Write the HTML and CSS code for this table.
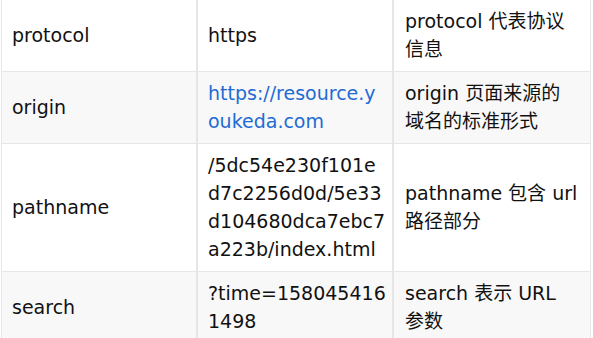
FILE: index.html
```html
<!DOCTYPE html>
<html lang="zh-CN">
<head>
<meta charset="utf-8">
<link rel="stylesheet" href="styles.css">
</head>
<body>
<table class="props">
  <tbody>
    <tr>
      <td class="k">protocol</td>
      <td class="v">https</td>
      <td class="d">protocol 代表协议信息</td>
    </tr>
    <tr class="alt">
      <td class="k">origin</td>
      <td class="v"><a class="link" href="#">https://resource.youkeda.com</a></td>
      <td class="d">origin 页面来源的域名的标准形式</td>
    </tr>
    <tr>
      <td class="k">pathname</td>
      <td class="v">/5dc54e230f101ed7c2256d0d/5e33d104680dca7ebc7a223b/index.html</td>
      <td class="d">pathname 包含 url 路径部分</td>
    </tr>
    <tr class="alt">
      <td class="k">search</td>
      <td class="v">?time=1580454161498</td>
      <td class="d">search 表示 URL 参数</td>
    </tr>
  </tbody>
</table>
</body>
</html>
```
FILE: styles.css
```css
html, body {
  margin: 0;
  padding: 0;
  background: #fff;
}
body {
  padding-left: 1px;
  font-family: "DejaVu Sans", "Noto Sans CJK SC", sans-serif;
  font-size: 19px;
  line-height: 28px;
  color: #111;
}
.props {
  border-collapse: separate;
  border-spacing: 0;
  table-layout: fixed;
  margin-top: -1px;
}
.props td {
  border-top: 1px solid #e6e6e6;
  border-left: 2px solid #e6e6e6;
  padding: 7px 11px 8px 11px;
  vertical-align: middle;
  word-break: break-all;
  box-sizing: content-box;
}
.props td.k {
  border-left-width: 1px;
  padding-left: 10px;
  width: 173px;
}
.props td.v {
  padding-left: 10px;
  padding-right: 6px;
  width: 178px;
}
.props td.d {
  width: 173px;
  padding-right: 12px;
  border-right: 1px solid #e6e6e6;
}
.props tr.alt td {
  background: #f8f8f8;
}
.link {
  color: #1f6bd4;
  text-decoration: none;
}
```
